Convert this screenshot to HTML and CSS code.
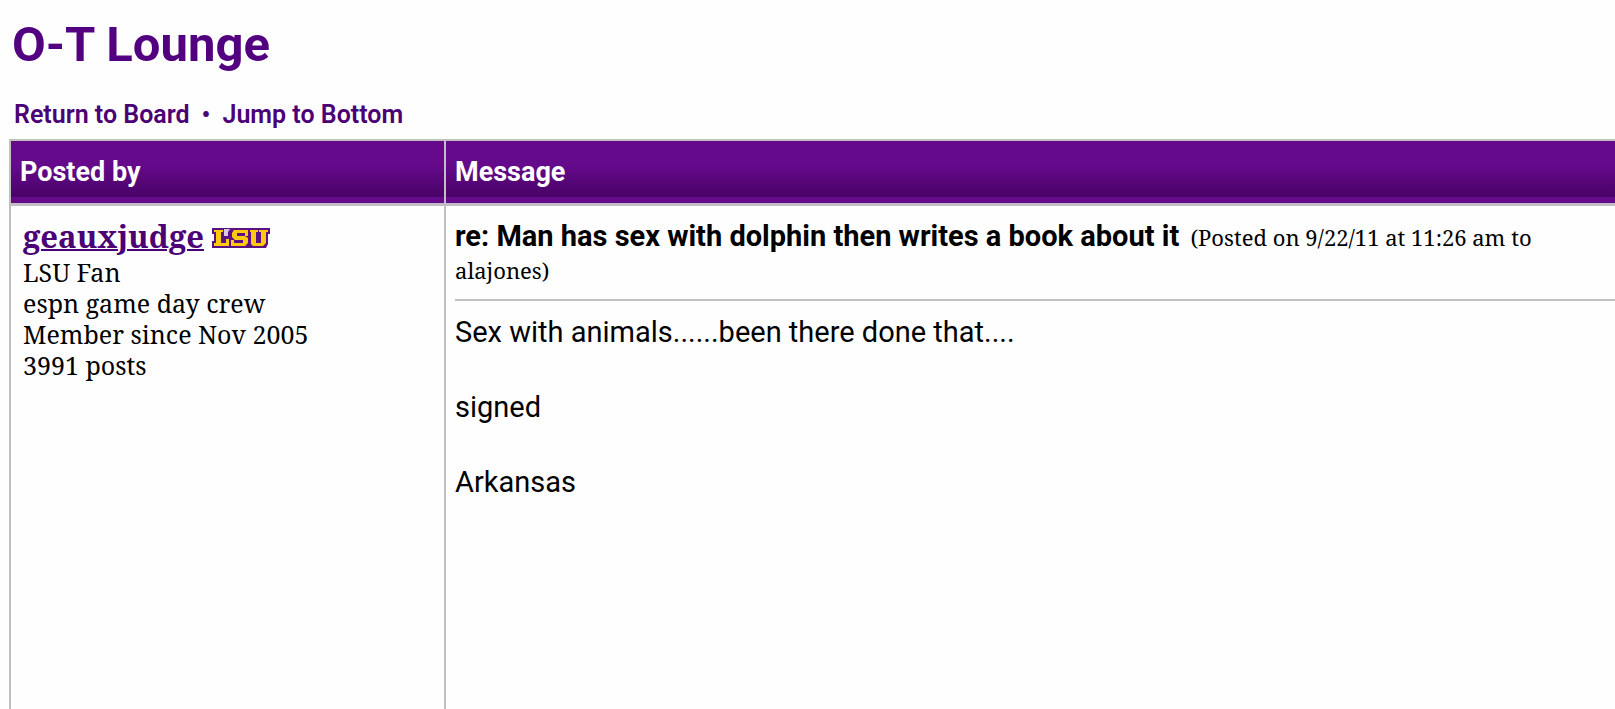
FILE: index.html
```html
<!DOCTYPE html>
<html lang="en">
<head>
<meta charset="utf-8">
<title>O-T Lounge</title>
<link rel="stylesheet" href="styles.css">
</head>
<body>
<header class="board-head">
  <h1 class="board-title">O-T Lounge</h1>
  <nav class="board-nav"><a href="#board">Return to Board</a><span>•</span><a href="#bottom">Jump to Bottom</a></nav>
</header>
<table class="thread">
  <thead>
    <tr><th class="author-col" scope="col">Posted by</th><th scope="col">Message</th></tr>
  </thead>
  <tbody>
    <tr>
      <td class="author">
        <div class="author-name"><a href="#user">geauxjudge</a>
          <svg class="team-logo" viewBox="0 0 58 20" role="img" aria-label="LSU">
            <path class="logo-edge" d="M0 0H58V6H56V16L54 20H0V13H2V6H0Z"/>
            <path class="logo-gap" d="M12 1H18L16 4V8H12Z"/>
            <path class="logo-fill" d="M2 2H11V4H9V15H14V11H17V18H2V15H4V4H2ZM22 2H36V8H33V5H25V8H33L36 10V15L33 18H19V12H22V15H31V12H23L20 9V5ZM38 2H46V4H44V15H49V4H47V2H56V4H54V15L51 18H41L39 16V4H38Z"/>
          </svg>
        </div>
        <div>LSU Fan</div>
        <div>espn game day crew</div>
        <div>Member since Nov 2005</div>
        <div>3991 posts</div>
      </td>
      <td class="message">
        <div class="post-head"><strong>re: Man has sex with dolphin then writes a book about it</strong> <span class="post-date">(Posted on 9/22/11 at 11:26 am to alajones)</span></div>
        <div class="post-body">
          <p>Sex with animals......been there done that....</p>
          <p>signed</p>
          <p>Arkansas</p>
        </div>
      </td>
    </tr>
  </tbody>
</table>
</body>
</html>
```
FILE: styles.css
```css
* { box-sizing: border-box; }

body {
  margin: 0;
  padding-left: 9px;
  height: 100vh;
  overflow: hidden;
  display: flex;
  flex-direction: column;
  background: #fefefe;
  color: #000;
  font-family: Roboto, sans-serif;
}

.board-head { padding: 17px 0 6px 3px; }
.board-title {
  margin: 0 0 24px;
  font-size: 49px;
  line-height: 56px;
  color: #520080;
}
.board-nav {
  display: flex;
  gap: 12px;
  padding-left: 2px;
  font-size: 25px;
  line-height: 36px;
  font-weight: 600;
  color: #4b0076;
}
.board-nav a { color: inherit; text-decoration: none; }

.thread {
  flex: 1;
  width: 100%;
  border-collapse: separate;
  border-spacing: 0;
  border-left: 2px solid #c0c0c0;
  border-top: 2px solid #c0c0c0;
}
.thread thead tr { height: 65px; }
.thread th {
  padding: 0 9px;
  border-bottom: 3px solid #c0bcc8;
  background: linear-gradient(#660a8c 0, #650a8b 24px, #4a0268 54px, #4a0268 56px, #660a8c 56px);
  color: #fff;
  font-size: 27px;
  text-align: left;
}
.thread .author-col { width: 435px; border-right: 2px solid #c0c0c0; }
.thread td { vertical-align: top; }

.author {
  padding: 13px 12px;
  border-right: 2px solid #c0c0c0;
  font-family: "Noto Serif", "DejaVu Serif", serif;
  font-size: 25px;
  line-height: 31px;
}
.author-name {
  display: flex;
  align-items: center;
  gap: 8px;
  margin-bottom: 4px;
  font-size: 31px;
  line-height: 34px;
  font-weight: 700;
}
.author-name a { color: #4b0076; text-decoration-thickness: 2px; }
.team-logo { width: 58px; height: 20px; margin-top: 4px; }
.logo-edge { fill: #5a1282; }
.logo-gap { fill: #d9c8e2; }
.logo-fill { fill: #fdc90f; fill-rule: evenodd; }

.message { padding: 14px 0 0 9px; }
.post-head {
  padding-bottom: 13px;
  border-bottom: 2px solid #c0c0c0;
  font-size: 29px;
  line-height: 33px;
}
.post-date {
  margin-left: 4px;
  font-family: "Noto Serif", "DejaVu Serif", serif;
  font-size: 22px;
  line-height: 24px;
}
.post-body { padding-top: 12px; font-size: 29px; line-height: 38px; }
.post-body p { margin: 0 0 37px; }
```
